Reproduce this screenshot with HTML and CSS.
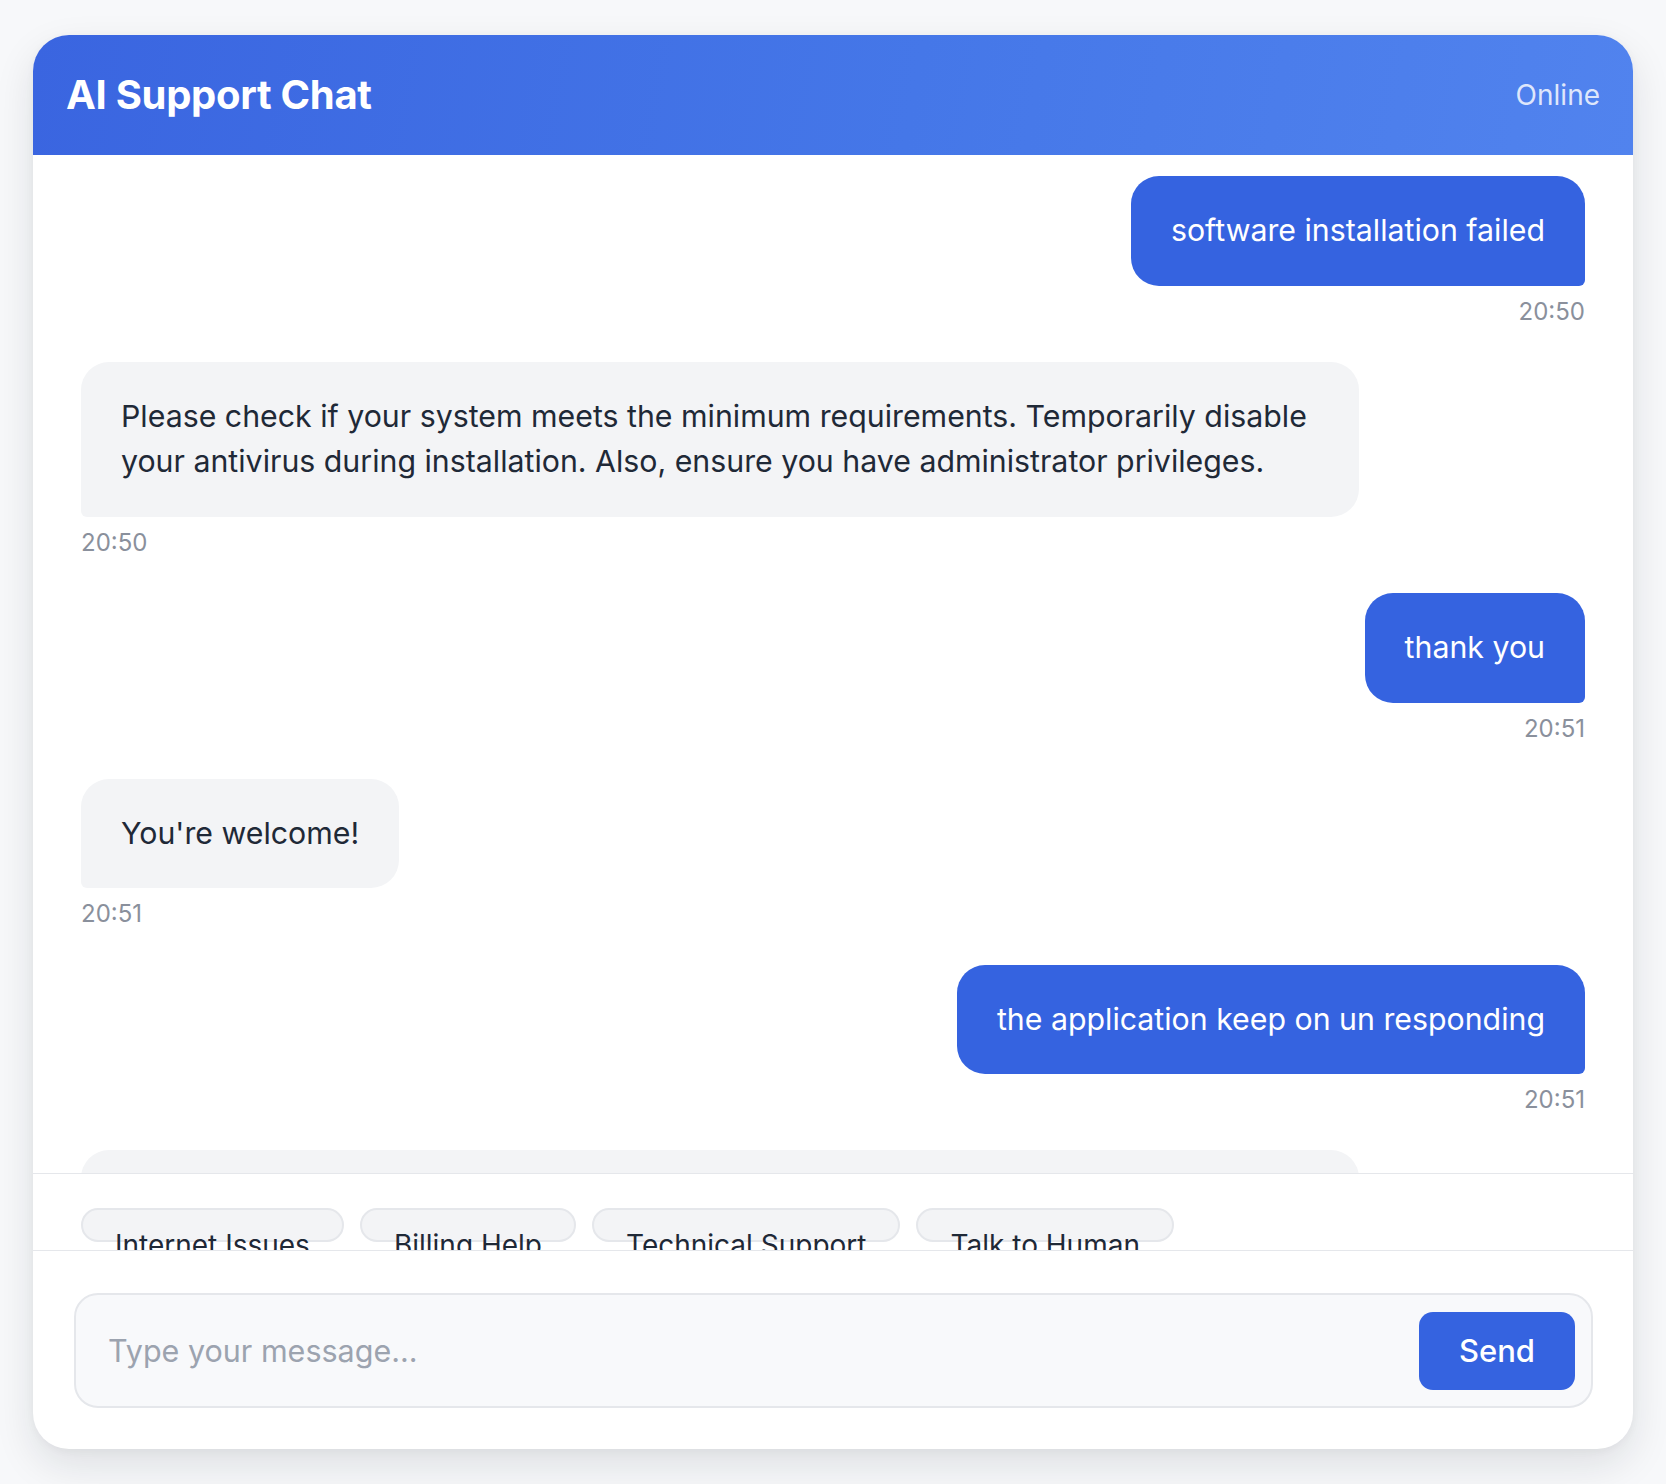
FILE: index.html
```html
<!DOCTYPE html>
<html lang="en">
<head>
<meta charset="utf-8">
<title>AI Support Chat</title>
<link rel="stylesheet" href="styles.css">
</head>
<body>
<div class="page">
  <div class="card">
    <header class="chat-header">
      <h1 class="title">AI Support Chat</h1>
      <span class="status">Online</span>
    </header>
    <div class="messages">
      <div class="msg user">
        <div class="bubble">software installation failed</div>
        <div class="time">20:50</div>
      </div>
      <div class="msg bot">
        <div class="bubble">Please check if your system meets the minimum requirements. Temporarily disable your antivirus during installation. Also, ensure you have administrator privileges.</div>
        <div class="time">20:50</div>
      </div>
      <div class="msg user">
        <div class="bubble">thank you</div>
        <div class="time">20:51</div>
      </div>
      <div class="msg bot">
        <div class="bubble">You're welcome!</div>
        <div class="time">20:51</div>
      </div>
      <div class="msg user">
        <div class="bubble">the application keep on un responding</div>
        <div class="time">20:51</div>
      </div>
      <div class="msg bot">
        <div class="bubble">Try closing other programs to free up memory, then restart the application. If it still stops responding, update it to the latest version or reinstall it.</div>
        <div class="time">20:51</div>
      </div>
    </div>
    <div class="quick">
      <button class="chip">Internet Issues</button>
      <button class="chip">Billing Help</button>
      <button class="chip">Technical Support</button>
      <button class="chip">Talk to Human</button>
    </div>
    <div class="composer">
      <div class="input-box">
        <input class="msg-input" type="text" placeholder="Type your message...">
        <button class="send">Send</button>
      </div>
    </div>
  </div>
</div>
</body>
</html>
```

FILE: styles.css
```css
* { box-sizing: border-box; }

html, body {
  margin: 0;
  padding: 0;
}

body {
  background: #f7f8fa;
  font-family: Inter, "Noto Sans", "Liberation Sans", sans-serif;
  color: #1f2937;
}

.page {
  height: 100vh;
  padding: 35px 33px;
}

.card {
  max-width: 1600px;
  height: 1414px;
  margin: 0 auto;
  background: #ffffff;
  border-radius: 36px;
  overflow: hidden;
  display: flex;
  flex-direction: column;
  box-shadow: 0 16px 40px rgba(17, 24, 39, 0.11), 0 2px 8px rgba(17, 24, 39, 0.04);
}

.chat-header {
  flex: none;
  height: 120px;
  padding: 0 33px;
  display: flex;
  align-items: center;
  justify-content: space-between;
  background: linear-gradient(100deg, #3a65e0 0%, #4577e8 55%, #5183ee 100%);
  color: #ffffff;
}

.title {
  margin: 0 0 2px;
  font-size: 40px;
  font-weight: 700;
  letter-spacing: -0.3px;
}

.status {
  font-size: 28px;
  color: rgba(255, 255, 255, 0.82);
}

.messages {
  flex: 1 1 auto;
  min-height: 0;
  overflow: hidden;
  padding: 21px 48px 0;
  display: flex;
  flex-direction: column;
}

.msg {
  flex: none;
  display: flex;
  flex-direction: column;
  margin-bottom: 32.3px;
}

.msg.user { align-items: flex-end; }
.msg.bot { align-items: flex-start; }

.bubble {
  max-width: 85%;
  padding: 32px 40px;
  font-size: 30.3px;
  line-height: 45.5px;
}

.user .bubble {
  background: #3563e0;
  color: #ffffff;
  border-radius: 28px 28px 6px 28px;
}

.bot .bubble {
  background: #f3f4f6;
  color: #1f2937;
  border-radius: 28px 28px 28px 6px;
}

.time {
  margin-top: 8px;
  font-size: 24px;
  line-height: 36px;
  color: #8a909c;
}

.quick {
  flex: none;
  height: 77px;
  border-top: 1px solid #e5e7eb;
  overflow: hidden;
  padding: 34px 48px 0;
  display: flex;
  align-items: flex-start;
  gap: 16px;
}

.chip {
  flex: none;
  height: 34px;
  padding: 19px 32px 0;
  border: 2px solid #e5e7eb;
  border-radius: 999px;
  background: #f3f4f6;
  color: #1f2937;
  font-family: inherit;
  font-size: 28px;
  line-height: 1.2;
  display: flex;
  align-items: flex-start;
  white-space: nowrap;
}

.composer {
  flex: none;
  height: 199px;
  border-top: 1px solid #e5e7eb;
  padding: 42px 40px 40px 41px;
}

.input-box {
  height: 115px;
  display: flex;
  align-items: center;
  gap: 16px;
  padding: 0 16px 0 32px;
  border: 2px solid #e5e7eb;
  border-radius: 24px;
  background: #f8f9fb;
}

.msg-input {
  flex: 1;
  min-width: 0;
  border: none;
  outline: none;
  background: transparent;
  font-family: inherit;
  font-size: 30.5px;
  color: #1f2937;
  padding: 0;
}

.msg-input::placeholder {
  color: #9ca3af;
}

.send {
  flex: none;
  height: 78px;
  padding: 0 40px;
  border: none;
  border-radius: 14px;
  background: #3563e0;
  color: #ffffff;
  font-family: inherit;
  font-size: 31px;
  font-weight: 500;
}
```
